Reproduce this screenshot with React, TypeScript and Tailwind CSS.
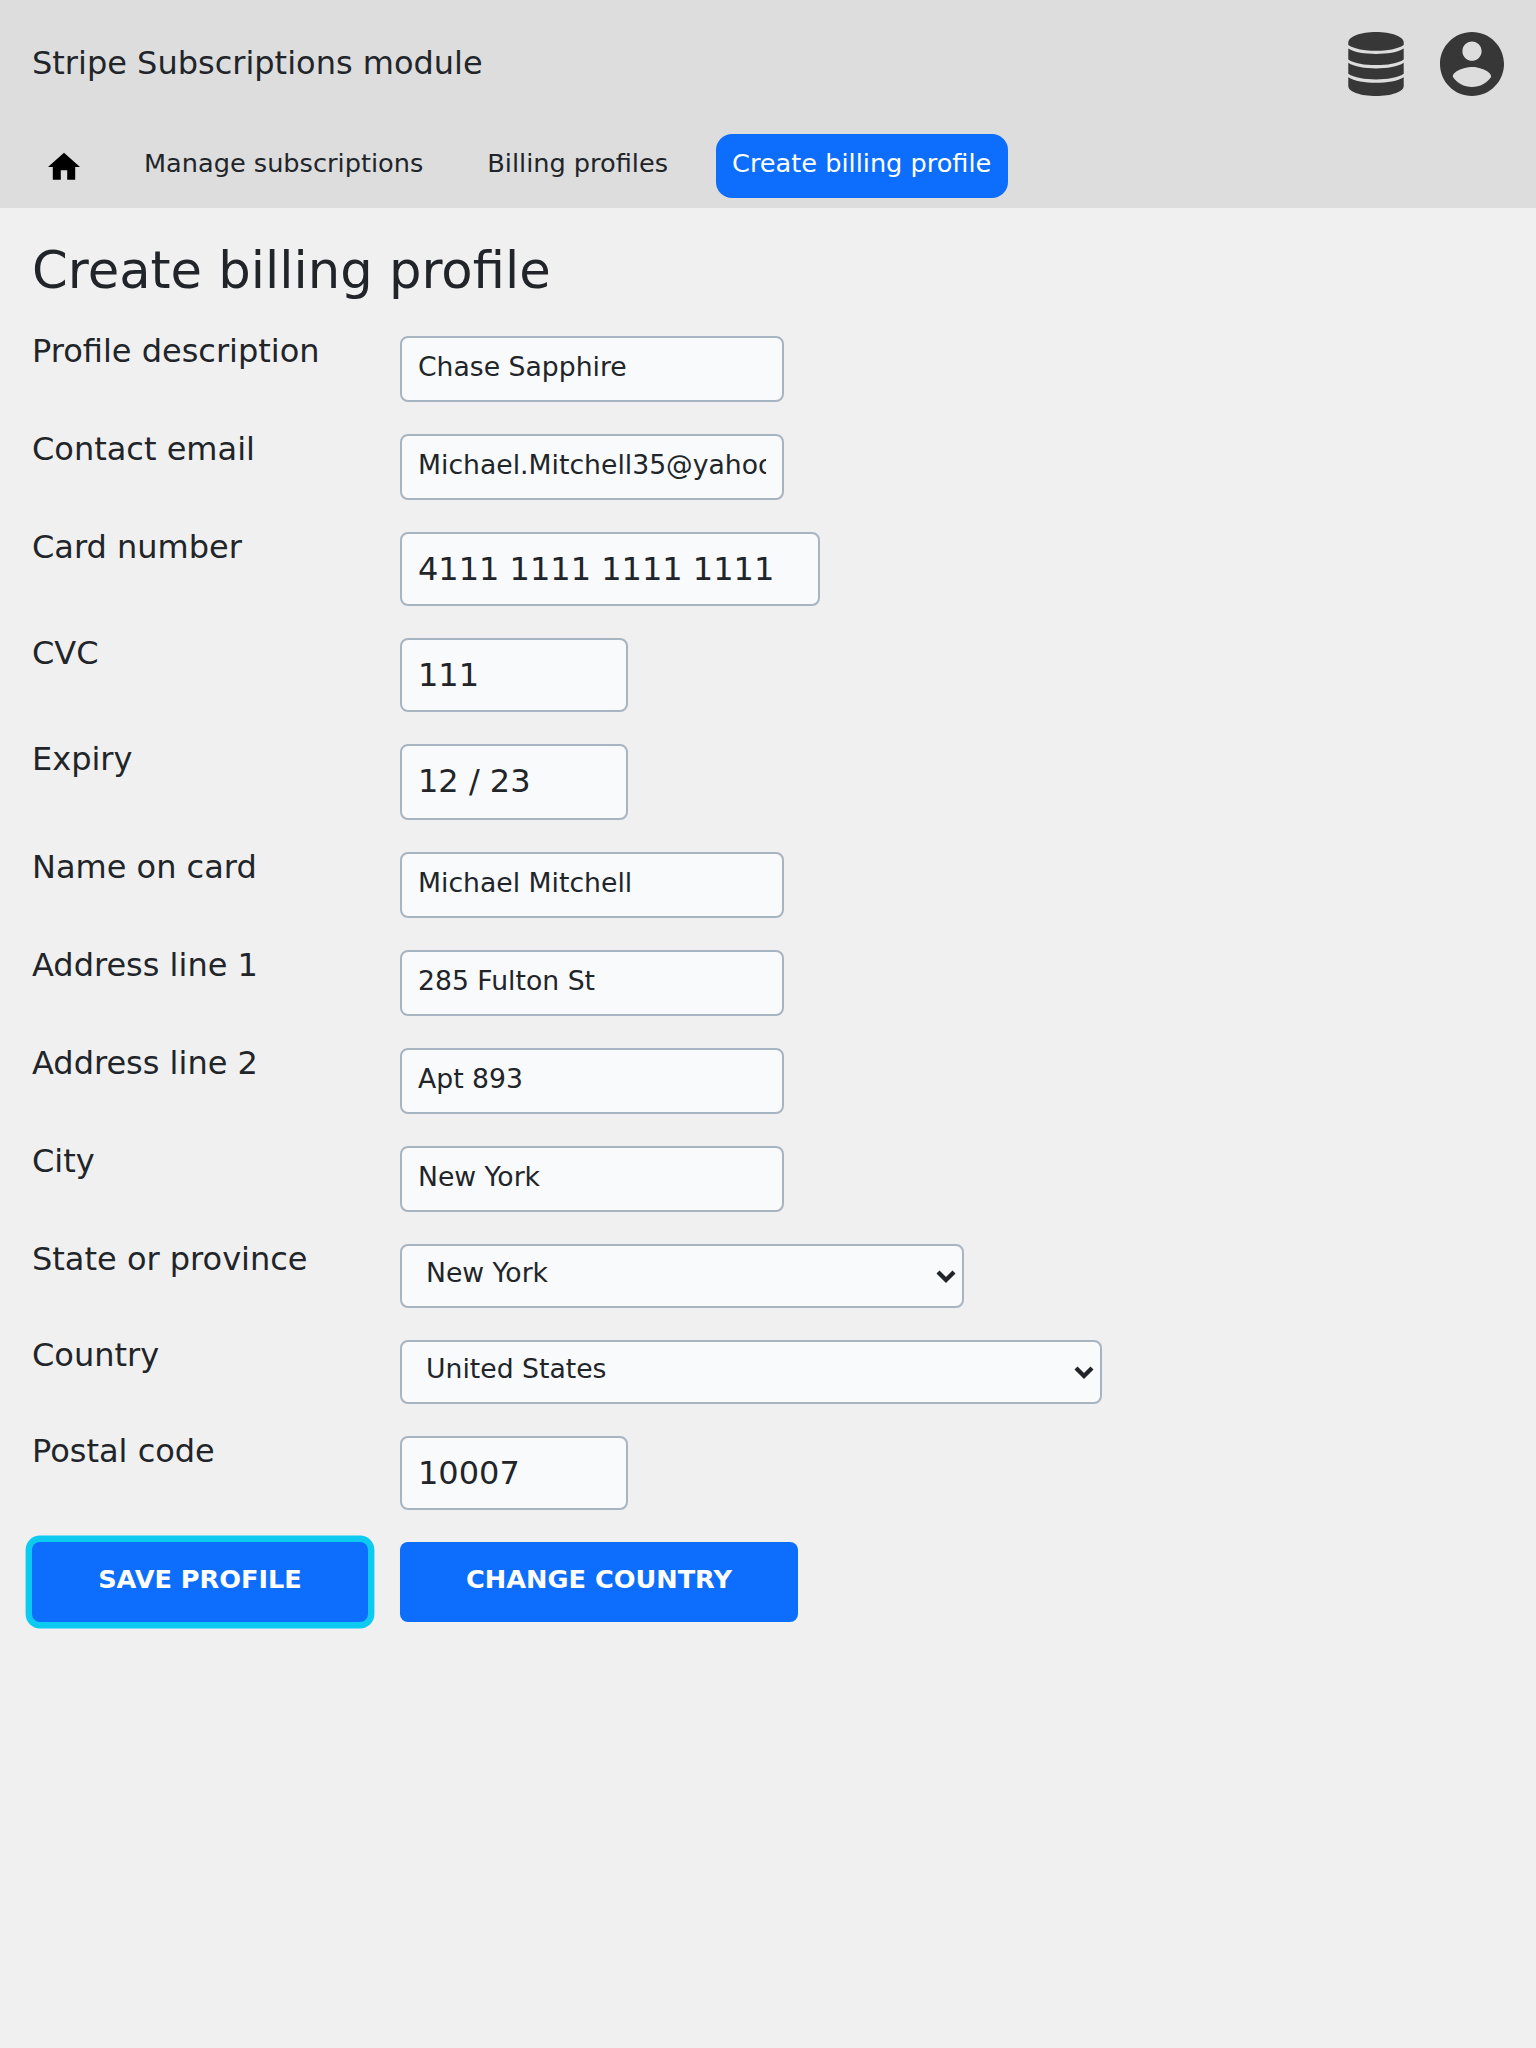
import type { ReactNode } from 'react';

type Field = {
  label: string;
  value: string;
  kind: 'text' | 'large' | 'select';
  size: string;
};

const fields: Field[] = [
  { label: 'Profile description', value: 'Chase Sapphire', kind: 'text', size: 'w-96 h-[66px]' },
  { label: 'Contact email', value: 'Michael.Mitchell35@yahoo.com', kind: 'text', size: 'w-96 h-[66px]' },
  { label: 'Card number', value: '4111 1111 1111 1111', kind: 'large', size: 'w-[420px] h-[74px] pb-px' },
  { label: 'CVC', value: '111', kind: 'large', size: 'w-[228px] h-[74px] pb-px' },
  { label: 'Expiry', value: '12 / 23', kind: 'large', size: 'w-[228px] h-[76px] pb-[3px]' },
  { label: 'Name on card', value: 'Michael Mitchell', kind: 'text', size: 'w-96 h-[66px]' },
  { label: 'Address line 1', value: '285 Fulton St', kind: 'text', size: 'w-96 h-[66px]' },
  { label: 'Address line 2', value: 'Apt 893', kind: 'text', size: 'w-96 h-[66px]' },
  { label: 'City', value: 'New York', kind: 'text', size: 'w-96 h-[66px]' },
  { label: 'State or province', value: 'New York', kind: 'select', size: 'w-[564px] h-16' },
  { label: 'Country', value: 'United States', kind: 'select', size: 'w-[702px] h-16' },
  { label: 'Postal code', value: '10007', kind: 'large', size: 'w-[228px] h-[74px] pb-px' },
];

function NavItem({ active, children }: { active?: boolean; children: ReactNode }) {
  return (
    <a
      className={
        active
          ? 'block h-16 w-[292px] rounded-2xl bg-[#0d6efd] px-4 pt-[10px] text-[25.6px] leading-[38.4px] whitespace-nowrap text-white'
          : 'block h-16 rounded-2xl px-4 pt-[10px] text-[25.6px] leading-[38.4px]'
      }
    >
      {children}
    </a>
  );
}

function Control({ field }: { field: Field }) {
  const frame = 'block rounded-lg border-2 border-[#a7b4c2] bg-[#f8fafc] text-[#212529] outline-none';
  if (field.kind === 'select') {
    return (
      <div className="relative">
        <select
          aria-label={field.label}
          defaultValue={field.value}
          className={`${frame} ${field.size} appearance-none px-6 pb-[6px] text-[26.667px]`}
        >
          <option>{field.value}</option>
        </select>
        <svg viewBox="0 0 20 16" className="pointer-events-none absolute top-6 right-2 h-4 w-5" fill="none">
          <path d="M2 4 10 12 18 4" stroke="#212529" strokeWidth="4.3" />
        </svg>
      </div>
    );
  }
  return (
    <input
      aria-label={field.label}
      defaultValue={field.value}
      className={
        field.kind === 'large'
          ? `${frame} px-4 text-[32px] ${field.size}`
          : `${frame} px-4 pb-[5px] text-[26.667px] ${field.size}`
      }
    />
  );
}

export default function App() {
  return (
    <div className="min-h-[2048px] bg-[#f0f0f0] font-['DejaVu_Sans',sans-serif] text-[#212529]">
      <header className="h-52 bg-[#dddddd]">
        <div className="flex h-[134px] items-start justify-between px-8 pt-8">
          <div className="pt-[7px] text-[32px] leading-[48px]">Stripe Subscriptions module</div>
          <div className="flex gap-8 text-[#373737]">
            <svg viewBox="0 0 64 64" className="size-16" fill="currentColor">
              <path d="M32 0C47 0 59.700 4.500 59.700 10.500V13C54 17 43 18.800 32 18.800S10 17 4.300 13V10.500C4.300 4.500 17 0 32 0z" />
              <path d="M4.300 16.600C10 20.400 21 22 32 22S54 20.400 59.700 16.600V27.400C54 31.400 43 33 32 33S10 31.400 4.300 27.400z" />
              <path d="M4.300 30.800C10 34.800 21 36.400 32 36.400S54 34.800 59.700 30.800V41.800C54 45.800 43 47.400 32 47.400S10 45.800 4.300 41.800z" />
              <path d="M4.300 45.200C10 49.100 21 50.700 32 50.700S54 49.100 59.700 45.200V54C59.700 60 47 64 32 64S4.300 60 4.300 54z" />
            </svg>
            <svg viewBox="2 2 20 20" className="size-16" fill="currentColor">
              <path d="M12 2C6.48 2 2 6.48 2 12s4.48 10 10 10 10-4.48 10-10S17.52 2 12 2zm0 3c1.66 0 3 1.34 3 3s-1.34 3-3 3-3-1.34-3-3 1.34-3 3-3zm0 14.200c-2.500 0-4.710-1.280-6-3.220.030-1.990 4-3.080 6-3.080 1.990 0 5.970 1.090 6 3.080-1.290 1.940-3.500 3.220-6 3.220z" />
            </svg>
          </div>
        </div>
        <nav className="flex gap-8 px-8">
          <a className="block h-16 w-16 px-4 pt-[18px]">
            <svg viewBox="2 2.6 20 17.5" className="h-7 w-8" fill="#000">
              <path d="M10 20v-6h4v6h5v-8h3L12 3 2 12h3v8z" />
            </svg>
          </a>
          <NavItem>Manage subscriptions</NavItem>
          <NavItem>Billing profiles</NavItem>
          <NavItem active>Create billing profile</NavItem>
        </nav>
      </header>
      <main className="px-8 pt-[30px]">
        <h1 className="mb-[34px] text-[51.2px] leading-[64px]">Create billing profile</h1>
        <form className="flex flex-col gap-8">
          {fields.map((field) => (
            <div key={field.label} className="flex items-start">
              <label className="w-[368px] text-[32px] leading-[30px]">{field.label}</label>
              <Control field={field} />
            </div>
          ))}
          <div className="flex gap-8">
            <button
              type="button"
              className="h-20 w-[336px] rounded-lg bg-[#0d6efd] pb-[6px] text-[25.6px] font-bold text-white uppercase shadow-[0_0_0_6.4px_#0dcaf0]"
            >
              Save profile
            </button>
            <button
              type="button"
              className="h-20 w-[398px] rounded-lg bg-[#0d6efd] pb-[6px] text-[25.6px] font-bold text-white uppercase"
            >
              Change country
            </button>
          </div>
        </form>
      </main>
    </div>
  );
}
